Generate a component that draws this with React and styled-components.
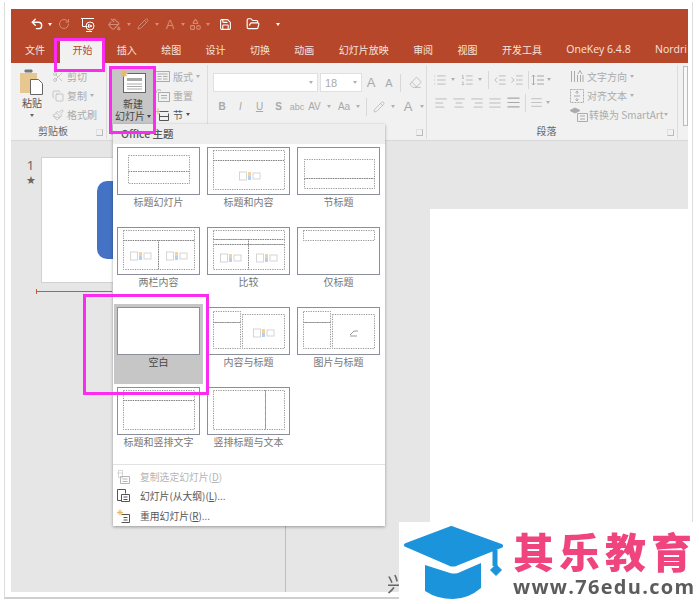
import React from "react";
import styled, { createGlobalStyle } from "styled-components";
import {
  Scissors, Copy, Paintbrush, Save, FolderOpen, RotateCw, Undo2, PaintBucket, Pencil, Shapes,
  List, ListOrdered, IndentDecrease, IndentIncrease, AlignLeft, AlignCenter, AlignRight, AlignJustify,
  Eraser,
} from "lucide-react";

const Global = createGlobalStyle`
  html, body { margin: 0; padding: 0; background: #fff; }
  body { font-family: "Noto Sans CJK SC", "Noto Sans", sans-serif; }
  #root { width: 699px; height: 604px; }
`;

const Page = styled.div`
  position: relative; width: 699px; height: 604px; overflow: hidden; background: #fff;
`;
const Frame = styled.div`
  position: relative; box-sizing: border-box; width: 689px; height: 597px; margin: 2px 0 0 4px;
  padding: 7px 4px 5px 6px; border-left: 1px solid #dcdcdc; border-right: 1px solid #dcdcdc;
  border-bottom: 2px solid #cfcfcf; filter: blur(0.45px);
`;
const Win = styled.div`
  display: flex; flex-direction: column; height: 100%; overflow: hidden; background: #e6e6e6;
`;
const TitleBar = styled.div`background: #b7472a; height: 54px; flex: none;`;
const Qat = styled.div`
  display: flex; align-items: center; height: 30px; padding: 0 0 0 18px; color: #fff;
`;
const QatCell = styled.span`
  display: flex; align-items: center; justify-content: center; width: ${p => p.$w}px; flex: none;
  color: ${p => (p.$off ? "#d58b75" : "#fff")}; font: 13px "Liberation Sans", sans-serif;
`;
const Caret = styled.span`
  display: block; flex: none; width: 0; height: 0; border-left: 2.5px solid transparent; border-right: 2.5px solid transparent;
  border-top: 3px solid ${p => p.$c || "#b0b0b0"};
`;
const Tabs = styled.div`display: flex; gap: 0.4px; height: 24px; padding-left: 2px; overflow: hidden;`;
const Tab = styled.div`
  flex: none; padding: 0 12px; line-height: 21px; font-size: ${p => (p.$latin ? 10.5 : 10)}px; white-space: nowrap;
  margin-right: ${p => p.$mr || 0}px; font-family: ${p => (p.$latin ? '"Open Sans", sans-serif' : "inherit")};
  color: ${p => (p.$active ? "#b7472a" : "#f6e4df")}; background: ${p => (p.$active ? "#f1f1f1" : "transparent")};
`;
const Ribbon = styled.div`
  display: flex; flex: none; height: 78px; box-sizing: border-box; background: #f1f1f1; border-bottom: 1px solid #d8d8d8;
  color: #ababab; font-size: 10px; overflow: hidden;
`;
const Group = styled.div`
  position: relative; flex: none; display: flex; flex-direction: column; box-sizing: border-box; width: ${p => p.$w}px;
  height: 74px; margin-top: 2px; border-right: 1px solid #dcdcdc; padding-left: ${p => p.$pl || 0}px;
`;
const GroupBody = styled.div`flex: 1; display: flex; min-height: 0;`;
const GroupLabel = styled.div`
  height: 15px; line-height: 13px; text-align: center; color: #666; font-size: 10px; padding-right: ${p => p.$pr || 0}px;
`;
const Launcher = styled.span`
  position: absolute; right: 3px; bottom: 3px; width: 5px; height: 5px; border: 1px solid #bbb; border-left-color: #e0e0e0; border-top-color: #e0e0e0;
`;
const PasteCol = styled.div`
  width: 40px; flex: none; display: flex; flex-direction: column; align-items: center; color: #555; padding-top: 4px; line-height: 12px;
  svg { margin-bottom: 2px; }
`;
const SmallCol = styled.div`display: flex; flex-direction: column; padding-top: ${p => p.$pt ?? 2}px; gap: 0;`;
const SmallItem = styled.div`
  height: 19px; display: flex; align-items: center; gap: ${p => p.$gap ?? 3}px; white-space: nowrap; color: ${p => p.$c || "#ababab"};
`;
const NewButton = styled.div`
  width: 44px; height: 69px; flex: none; margin: 1px 0 0 4px; background: #c6c6c6; color: #444; display: flex; flex-direction: column;
  align-items: center; line-height: 12px; text-align: center; padding-top: 4px; box-sizing: border-box;
  svg { margin-bottom: 4px; }
`;
const NewLine = styled.div`display: flex; align-items: center; gap: 2px; white-space: nowrap;`;
const FontCols = styled.div`display: flex; flex-direction: column; padding: 8px 0 0 5px; gap: 5px;`;
const Row = styled.div`display: flex; align-items: center; height: ${p => p.$h || 19}px;`;
const InputBox = styled.div`
  width: ${p => p.$w}px; height: 19px; box-sizing: border-box; flex: none; background: #fff; border: 1px solid #e0e0e0; margin-right: ${p => p.$mr || 0}px;
  display: flex; align-items: center; justify-content: space-between; padding: 0 4px; font: 11px "Liberation Sans", sans-serif; color: #aaa;
`;
const Cell = styled.span`
  display: flex; align-items: center; justify-content: center; flex: none; width: ${p => p.$w}px; color: #a8a8a8;
  font: ${p => (p.$bold ? "bold " : "")}${p => p.$size || 10}px "Liberation Sans", sans-serif;
  font-style: ${p => (p.$italic ? "italic" : "normal")}; text-decoration: ${p => (p.$under ? "underline" : "none")};
`;
const Sep = styled.span`display: block; flex: none; width: 1px; height: 18px; background: #d8d8d8; margin: 0 ${p => p.$m ?? 4}px;`;
const ParaLeft = styled.div`display: flex; flex-direction: column; width: 143px; padding: 6px 0 0 5px; box-sizing: border-box; flex: none; gap: 5px;`;
const BoxTail = styled.div`width: 8px; height: 58px; margin: 3px 0 0 5px; border: 1px solid #bbb; background: #f8f8f8;`;

const Work = styled.div`flex: 1; display: flex; min-height: 0;`;
const Side = styled.div`
  width: 275px; flex: none; box-sizing: border-box; border-right: 1px solid #bdbdbd; padding: 16px 0 0 9px; display: flex; gap: 0;
`;
const NumCol = styled.div`
  width: 21px; flex: none; text-align: center; color: #666; font: 13px/16px "Noto Sans", sans-serif;
`;
const Star = styled.div`font-size: 11px; line-height: 14px; color: #666;`;
const ThumbCol = styled.div`flex: 1; min-width: 0;`;
const SlideThumb = styled.div`
  width: 223px; height: 126px; box-sizing: border-box; background: #fff; border: 1px solid #d2d2d2; padding: 23px 0 0 55px;
`;
const Blue = styled.div`width: 120px; height: 78px; background: #4472c4; border-radius: 10px;`;
const RedLine = styled.div`
  width: 76px; height: 1px; background: #c9583f; margin: 8px 0 0 -5px; position: relative;
  &::before { content: ""; position: absolute; left: 0; top: -2px; width: 1px; height: 5px; background: #c9583f; }
`;
const Editor = styled.div`flex: 1; padding: 68px 0 0 144px; display: flex;`;
const Canvas = styled.div`flex: 1; background: #fff;`;

const Menu = styled.div`
  position: absolute; left: 108px; top: 122px; width: 272px; height: 402px; background: #fff; display: flex; flex-direction: column;
  box-shadow: 0 1px 3px rgba(0,0,0,.35); color: #555; font-size: 10px;
`;
const MenuHead = styled.div`
  height: 20px; background: #eeeeee; font-size: 10.5px; line-height: 20px; padding-left: 8px; color: #555; font-weight: 500; flex: none;
`;
const Gallery = styled.div`
  display: grid; grid-template-columns: repeat(3, 90px); grid-auto-rows: 80px; padding-left: 1px; flex: none; height: 320px;
`;
const Layout = styled.div`
  width: 89px; padding: 3px 0 0 3px; box-sizing: border-box; background: ${p => (p.$on ? "#c6c6c6" : "transparent")}; color: ${p => (p.$on ? "#444" : "#777")};
`;
const Sheet = styled.div`
  width: 83px; height: 48px; box-sizing: border-box; background: #fff; border: 1px solid #8b8f9b; border-bottom-width: 1.5px; svg { display: block; }
`;
const LayoutName = styled.div`text-align: center; width: 83px; line-height: 13px; margin-top: 0; font-size: 10px; white-space: nowrap;`;
const MenuFoot = styled.div`border-top: 1px solid #e2e2e2; padding-top: 2px; flex: 1;`;
const FootItem = styled.div`
  display: flex; align-items: center; height: 19.5px; padding-left: 4px; gap: 10px; color: ${p => (p.$off ? "#b5b5b5" : "#555")}; font-size: 9.8px;
  u { text-underline-offset: 1px; }
`;
const Mark = styled.div`
  position: absolute; border: 3px solid #fb2cf0; box-sizing: border-box; left: ${p => p.$x - 5}px; top: ${p => p.$y - 2}px; width: ${p => p.$w}px; height: ${p => p.$h}px;
`;
const Fragment = styled.div`
  position: absolute; left: 382px; top: 571px; width: 12px; height: 22px; overflow: hidden; font-size: 20px; line-height: 22px; color: #666; white-space: nowrap;
`;
const Brand = styled.div`
  position: absolute; left: 399px; top: 522px; width: 300px; height: 82px; background: #fff; display: flex; padding: 4px 0 0 4px; box-sizing: border-box;
`;
const BrandText = styled.div`margin-left: 9px; display: flex; flex-direction: column;`;
const BrandName = styled.div`
  color: #f0447f; font: 800 41px/47px "Noto Sans CJK SC", sans-serif; letter-spacing: 5px; white-space: nowrap; margin-top: 1px;
`;
const BrandUrl = styled.div`
  color: #5c5c5c; font: bold 20px/20px "Open Sans", sans-serif; letter-spacing: 1.3px; white-space: nowrap; margin-top: 3px;
`;

const D = ({ x, y, w, h }) => (
  <rect x={x + .5} y={y + .5} width={w} height={h} fill="none" stroke="#777" strokeWidth=".8" strokeDasharray="1.2 1.2" />
);
const Content = ({ x, y }) => (
  <g transform={`translate(${x - 11} ${y - 5})`} opacity=".75">
    <rect x=".5" y="1" width="7" height="8" fill="none" stroke="#bbb" strokeWidth=".8" />
    <rect x="9" y="1" width="3" height="4" fill="#ecc586" />
    <rect x="9" y="5" width="3" height="4" fill="#9fbfe2" />
    <rect x="14" y="2" width="7" height="6" fill="none" stroke="#bbb" strokeWidth=".8" />
  </g>
);
const Pic = ({ x, y }) => (
  <path transform={`translate(${x - 4} ${y - 3})`} d="M0 5 4 1 8 1M0 6H7" fill="none" stroke="#999" />
);
const layouts = [
  { n: "标题幻灯片", r: [[11, 8, 61, 16], [11, 24, 61, 12]] },
  { n: "标题和内容", r: [[6, 3, 71, 10], [6, 13, 71, 29]], c: [[42, 28]] },
  { n: "节标题", r: [[7, 12, 70, 19], [7, 31, 70, 10]] },
  { n: "两栏内容", r: [[6, 3, 71, 10], [6, 13, 35, 29], [41, 13, 36, 29]], c: [[23, 28], [59, 28]] },
  { n: "比较", r: [[6, 3, 71, 9], [6, 12, 35, 5], [41, 12, 36, 5], [6, 17, 35, 25], [41, 17, 36, 25]], c: [[23, 30], [59, 30]] },
  { n: "仅标题", r: [[6, 3, 71, 10]] },
  { n: "空白", r: [], on: true },
  { n: "内容与标题", r: [[6, 4, 27, 11], [6, 15, 27, 26], [35, 7, 42, 34]], c: [[56, 25]] },
  { n: "图片与标题", r: [[6, 4, 27, 11], [6, 15, 27, 26], [35, 7, 42, 34]], p: [[56, 25]] },
  { n: "标题和竖排文字", r: [[6, 3, 71, 10], [6, 13, 71, 29]] },
  { n: "竖排标题与文本", r: [[6, 3, 52, 39], [58, 3, 19, 39]] },
];

const NewIcon = () => (
  <svg width="30" height="24" viewBox="0 0 30 24">
    <rect x="5.5" y="3.5" width="22" height="19" fill="#fff" stroke="#666" />
    <rect x="9" y="8" width="15" height="3" fill="#aaa" />
    <path d="M9 14h15M9 16.5h15M9 19h15" stroke="#aaa" />
    <path d="M6 0v7M2.500 3.500h7M3.500 1l5 5M8.500 1l-5 5" stroke="#e9b965" strokeWidth="1.4" />
  </svg>
);
const PasteIcon = () => (
  <svg width="25" height="26" viewBox="0 0 25 26">
    <path d="M0 4h17v20H0z" fill="#e8c68f" />
    <path d="M5 3h7V1h-7z" fill="#777" stroke="#777" />
    <path d="M10.500 10.500h8l4 4v11h-12z" fill="#fff" stroke="#666" />
  </svg>
);
const Ico = ({ w = 14, h = 14, children }) => (
  <svg width={w} height={h} viewBox={`0 0 ${w} ${h}`} fill="none" stroke="currentColor" strokeWidth="1">{children}</svg>
);
const PresentIcon = () => (
  <Ico w={15} h={15}>
    <path d="M1 1.500h13M2.500 1.500v8h5" />
    <circle cx="10" cy="9" r="4" />
    <path d="M8.500 7.500 12 9l-3.500 1.500zM6 14.500h6" />
  </Ico>
);
const LayoutIcon = () => (
  <Ico w={15} h={13}><rect x=".5" y="1.500" width="14" height="10" /><path d="M2.500 4h10M2.500 6.500h4M2.500 9h4M8 6.500h4.500M8 9h4.500" /></Ico>
);
const ResetIcon = () => (
  <Ico w={15} h={13}><rect x="3.500" y="3.500" width="11" height="9" /><path d="M6 6.500h6M6 9h6M1 4a3 3 0 0 1 5-2.500" /></Ico>
);
const SectionIcon = () => (
  <Ico w={15} h={13}>
    <path d="M0 3.500h6M3 .500v6" stroke="#e9b965" />
    <path d="M4.500 3.500h9M4.500 5.500v7M13.500 5.500v7M4.500 8.500h9M4.500 12.500h9" />
  </Ico>
);
const LineSpace = () => (
  <Ico w={14} h={14}><path d="M2.500 2v10M1 3.500 2.500 2 4 3.500M1 10.500 2.500 12 4 10.500M6 3h7M6 7h7M6 11h7" /></Ico>
);
const TextDir = () => (
  <Ico w={14} h={14}><path d="M1.500 1v11M4.500 1v11M7.500 5v7M10.500 5v7M13 5v7M8 4l2-3.500L12 4" /></Ico>
);
const VAlign = () => (
  <Ico w={14} h={14}><path d="M.500.500h13v13h-13z" strokeDasharray="2 1" /><path d="M7 2v3M5.500 3.500 7 2l1.500 1.500M7 12V9M5.500 10.500 7 12l1.500-1.500M4 7h6" /></Ico>
);
const Smart = () => (
  <Ico w={18} h={15}><path d="M0 3.500 5 1l5 2.500L5 6z" fill="currentColor" /><path d="M7.500 6.500h10v8h-10zM10 9h5M10 12h5" /></Ico>
);
const DupIcon = () => (
  <Ico w={13} h={14}><path d="M1.500.500h4v7h-4zM.500 3h5" strokeDasharray="1 1" /><path d="M3.500 6.500h9v7h-9zM5.500 9h5M5.500 11.500h5" /></Ico>
);
const OutlineIcon = () => (
  <Ico w={13} h={14}><path d="M4 11.500H.500v-11h8v4" /><path d="M4.500 5.500h8v7h-8zM6.500 8h4M6.500 10.500h4" /></Ico>
);
const ReuseIcon = () => (
  <Ico w={13} h={14}>
    <path d="M0 3.500h6M3 .500v6M1 1.500l4 4M5 1.500l-4 4" stroke="#e9b965" />
    <path d="M4.500 5.500h8v8h-8M6.500 8.500h4M6.500 11h4" />
  </Ico>
);

const gi = { strokeWidth: 1.2 };

export default function App() {
  return (
    <Page>
      <Global />
      <Frame>
        <Win>
          <TitleBar>
            <Qat>
              <QatCell $w={16}><Undo2 size={14} strokeWidth={2.4} /></QatCell>
              <QatCell $w={10}><Caret $c="#fff" /></QatCell>
              <QatCell $w={18} $off><RotateCw size={12} /></QatCell>
              <QatCell $w={29}><PresentIcon /></QatCell>
              <QatCell $w={24} $off><PaintBucket size={13} /></QatCell>
              <QatCell $w={6}><Caret $c="#d58b75" /></QatCell>
              <QatCell $w={22} $off><Pencil size={12} /></QatCell>
              <QatCell $w={6}><Caret $c="#d58b75" /></QatCell>
              <QatCell $w={20} $off>A</QatCell>
              <QatCell $w={6}><Caret $c="#d58b75" /></QatCell>
              <QatCell $w={19} $off><Shapes size={13} /></QatCell>
              <QatCell $w={6}><Caret $c="#d58b75" /></QatCell>
              <QatCell $w={28}><Save size={13} /></QatCell>
              <QatCell $w={28}><FolderOpen size={14} /></QatCell>
              <QatCell $w={22}><Caret $c="#fff" /></QatCell>
            </Qat>
            <Tabs>
              <Tab $mr={3}>文件</Tab>
              <Tab $active>开始</Tab>
              <Tab>插入</Tab>
              <Tab>绘图</Tab>
              <Tab>设计</Tab>
              <Tab>切换</Tab>
              <Tab>动画</Tab>
              <Tab>幻灯片放映</Tab>
              <Tab>审阅</Tab>
              <Tab>视图</Tab>
              <Tab>开发工具</Tab>
              <Tab $latin>OneKey 6.4.8</Tab>
              <Tab $latin>Nordri</Tab>
            </Tabs>
          </TitleBar>
          <Ribbon>
            <Group $w={96} $pl={1}>
              <GroupBody>
                <PasteCol>
                  <PasteIcon />
                  <span>粘贴</span>
                  <Caret $c="#666" style={{ marginTop: 5 }} />
                </PasteCol>
                <SmallCol>
                  <SmallItem><Scissors size={12} {...gi} />剪切</SmallItem>
                  <SmallItem><Copy size={12} {...gi} />复制 <Caret /></SmallItem>
                  <SmallItem><Paintbrush size={12} {...gi} />格式刷</SmallItem>
                </SmallCol>
              </GroupBody>
              <GroupLabel $pr={12}>剪贴板</GroupLabel>
              <Launcher />
            </Group>
            <Group $w={101}>
              <GroupBody>
                <NewButton>
                  <NewIcon />
                  <span>新建</span>
                  <NewLine>幻灯片<Caret $c="#444" /></NewLine>
                </NewButton>
                <SmallCol>
                  <SmallItem><LayoutIcon />版式<Caret /></SmallItem>
                  <SmallItem><ResetIcon />重置</SmallItem>
                  <SmallItem $c="#555"><SectionIcon />节<Caret $c="#555" /></SmallItem>
                </SmallCol>
              </GroupBody>
            </Group>
            <Group $w={219}>
              <FontCols>
                <Row>
                  <InputBox $w={105} $mr={2}><span /><Caret /></InputBox>
                  <InputBox $w={42}><span>18</span><Caret /></InputBox>
                  <Cell $w={18} $size={13}>A</Cell>
                  <Cell $w={18} $size={11}>A</Cell>
                  <Sep $m={2} />
                  <Cell $w={24}><Eraser size={13} {...gi} /></Cell>
                </Row>
                <Row>
                  <Cell $w={18} $bold>B</Cell>
                  <Cell $w={19} $italic>I</Cell>
                  <Cell $w={19} $under>U</Cell>
                  <Cell $w={19} $bold>S</Cell>
                  <Cell $w={18} $size={9}>abc</Cell>
                  <Cell $w={17}>AV</Cell>
                  <Cell $w={12}><Caret /></Cell>
                  <Cell $w={18}>Aa</Cell>
                  <Cell $w={10}><Caret /></Cell>
                  <Sep $m={3} />
                  <Cell $w={18}><Pencil size={12} {...gi} /></Cell>
                  <Cell $w={10}><Caret /></Cell>
                  <Cell $w={20} $size={13}>A</Cell>
                  <Cell $w={8}><Caret /></Cell>
                </Row>
              </FontCols>
              <Launcher />
            </Group>
            <Group $w={251}>
              <GroupBody>
                <ParaLeft>
                  <Row $h={17}>
                    <Cell $w={15}><List size={14} {...gi} /></Cell>
                    <Cell $w={12}><Caret /></Cell>
                    <Cell $w={15}><ListOrdered size={14} {...gi} /></Cell>
                    <Cell $w={12}><Caret /></Cell>
                    <Sep $m={2} />
                    <Cell $w={17}><IndentDecrease size={14} {...gi} /></Cell>
                    <Cell $w={18}><IndentIncrease size={14} {...gi} /></Cell>
                    <Sep $m={2} />
                    <Cell $w={14}><LineSpace /></Cell>
                    <Cell $w={8}><Caret /></Cell>
                  </Row>
                  <Row>
                    <Cell $w={18}><AlignLeft size={14} {...gi} /></Cell>
                    <Cell $w={18}><AlignCenter size={14} {...gi} /></Cell>
                    <Cell $w={18}><AlignRight size={14} {...gi} /></Cell>
                    <Cell $w={18}><AlignJustify size={14} {...gi} /></Cell>
                    <Cell $w={18}><AlignJustify size={15} strokeWidth={1.8} /></Cell>
                    <Sep $m={3} />
                    <Cell $w={14}><AlignJustify size={13} {...gi} /></Cell>
                    <Cell $w={10}><Caret /></Cell>
                  </Row>
                </ParaLeft>
                <SmallCol>
                  <SmallItem><TextDir />文字方向<Caret /></SmallItem>
                  <SmallItem><VAlign />对齐文本<Caret /></SmallItem>
                  <SmallItem $gap={1}><Smart />转换为 SmartArt<Caret /></SmallItem>
                </SmallCol>
              </GroupBody>
              <GroupLabel $pr={11}>段落</GroupLabel>
              <Launcher />
            </Group>
            <BoxTail />
          </Ribbon>
          <Work>
            <Side>
              <NumCol>
                1
                <Star>★</Star>
              </NumCol>
              <ThumbCol>
                <SlideThumb><Blue /></SlideThumb>
                <RedLine />
              </ThumbCol>
            </Side>
            <Editor><Canvas /></Editor>
          </Work>
        </Win>
        <Menu>
          <MenuHead>Office 主题</MenuHead>
          <Gallery>
            {layouts.map(l => (
              <Layout key={l.n} $on={l.on}>
                <Sheet>
                  <svg width="81" height="45" viewBox="0 0 81 45">
                    {l.r.map((r, i) => <D key={i} x={r[0] - 1} y={r[1] - 1} w={r[2]} h={r[3]} />)}
                    {(l.c || []).map((c, i) => <Content key={i} x={c[0]} y={c[1]} />)}
                    {(l.p || []).map((c, i) => <Pic key={i} x={c[0]} y={c[1]} />)}
                  </svg>
                </Sheet>
                <LayoutName>{l.n}</LayoutName>
              </Layout>
            ))}
          </Gallery>
          <MenuFoot>
            <FootItem $off><DupIcon /><span>复制选定幻灯片(<u>D</u>)</span></FootItem>
            <FootItem><OutlineIcon /><span>幻灯片(从大纲)(<u>L</u>)...</span></FootItem>
            <FootItem><ReuseIcon /><span>重用幻灯片(<u>R</u>)...</span></FootItem>
          </MenuFoot>
        </Menu>
        <Fragment>兴</Fragment>
        <Mark $x={54} $y={38} $w={51} $h={34} />
        <Mark $x={109} $y={66} $w={47} $h={68} />
        <Mark $x={83} $y={294} $w={126} $h={101} />
      </Frame>
      <Brand>
        <svg width="101" height="74" viewBox="0 0 101 74">
          <path d="M3 19 48 2 98 20 53 38Q50 39 47 38Z" fill="#1b94dc" stroke="#1b94dc" strokeWidth="4" strokeLinejoin="round" />
          <path d="M22 39 47 47Q51 48 55 47L78 37V62Q65 73 50 73 34 73 22 65Z" fill="#1b94dc" />
          <path d="M92 24V40" stroke="#1b94dc" strokeWidth="5" />
          <path d="M93 38 99 44 93 50 87 44Z" fill="#1b94dc" />
        </svg>
        <BrandText>
          <BrandName>其乐教育</BrandName>
          <BrandUrl>www.76edu.com</BrandUrl>
        </BrandText>
      </Brand>
    </Page>
  );
}
